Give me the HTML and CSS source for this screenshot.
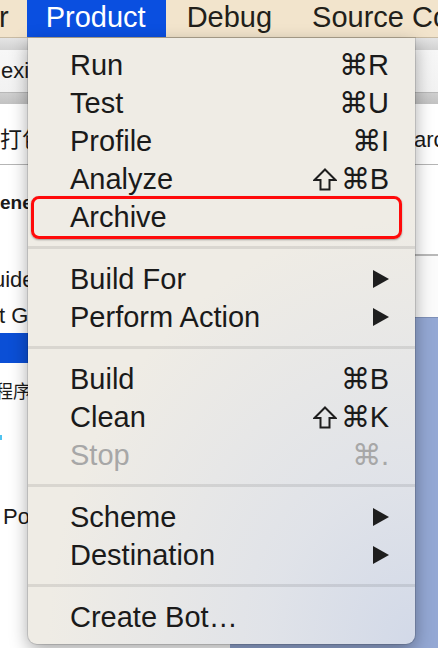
FILE: index.html
```html
<!DOCTYPE html>
<html>
<head>
<meta charset="utf-8">
<link rel="stylesheet" href="styles.css">
</head>
<body>
<div class="screen">
  <div class="menubar">
    <span class="mb-item mb-first">r</span>
    <span class="mb-item mb-active">Product</span>
    <span class="mb-item">Debug</span>
    <span class="mb-item">Source Control</span>
  </div>
  <div class="window">
    <div class="toolbar"></div>
    <div class="tabrow"><span class="tab-text">exi</span></div>
    <div class="greybar"></div>
    <div class="inforow">
      <span class="info-left">打包</span>
      <span class="info-right">arch</span>
    </div>
    <div class="panes">
      <div class="leftpane">
        <div class="lp-head"><span class="bold">ene</span></div>
        <div class="lp-row lp-uide">uide</div>
        <div class="lp-row lp-tg">t G</div>
        <div class="lp-selected"></div>
        <div class="lp-row lp-cjk">程序</div>
        <div class="lp-mark"><span class="cyan"></span></div>
        <div class="lp-row lp-po">Po</div>
      </div>
      <div class="rightpane">
        <div class="rp-white"></div>
        <div class="rp-white2"></div>
        <div class="rp-blue"></div>
      </div>
    </div>
  </div>

  <div class="menu">
    <div class="item"><span class="label">Run</span><span class="key">⌘R</span></div>
    <div class="item"><span class="label">Test</span><span class="key">⌘U</span></div>
    <div class="item"><span class="label">Profile</span><span class="key">⌘I</span></div>
    <div class="item"><span class="label">Analyze</span><span class="key"><svg class="shift" width="24" height="23" viewBox="0 0 24 23"><path d="M12 1.5 L22.5 12 H16.5 V21.5 H7.5 V12 H1.5 Z" fill="none" stroke="#1e1e1e" stroke-width="2" stroke-linejoin="miter"/></svg>⌘B</span></div>
    <div class="item item-marked"><span class="label">Archive</span></div>
    <div class="sep"></div>
    <div class="item"><span class="label">Build For</span><svg class="arrow" width="16" height="18" viewBox="0 0 16 18"><polygon points="0,0 16,9 0,18" fill="#1e1e1e"/></svg></div>
    <div class="item"><span class="label">Perform Action</span><svg class="arrow" width="16" height="18" viewBox="0 0 16 18"><polygon points="0,0 16,9 0,18" fill="#1e1e1e"/></svg></div>
    <div class="sep"></div>
    <div class="item"><span class="label">Build</span><span class="key">⌘B</span></div>
    <div class="item"><span class="label">Clean</span><span class="key"><svg class="shift" width="24" height="23" viewBox="0 0 24 23"><path d="M12 1.5 L22.5 12 H16.5 V21.5 H7.5 V12 H1.5 Z" fill="none" stroke="#1e1e1e" stroke-width="2" stroke-linejoin="miter"/></svg>⌘K</span></div>
    <div class="item item-disabled"><span class="label">Stop</span><span class="key">⌘.</span></div>
    <div class="sep"></div>
    <div class="item"><span class="label">Scheme</span><svg class="arrow" width="16" height="18" viewBox="0 0 16 18"><polygon points="0,0 16,9 0,18" fill="#1e1e1e"/></svg></div>
    <div class="item"><span class="label">Destination</span><svg class="arrow" width="16" height="18" viewBox="0 0 16 18"><polygon points="0,0 16,9 0,18" fill="#1e1e1e"/></svg></div>
    <div class="sep"></div>
    <div class="item"><span class="label">Create Bot…</span></div>
  </div>
</div>
</body>
</html>
```

FILE: styles.css
```css
*, *::before, *::after { box-sizing: border-box; }
html, body { margin: 0; padding: 0; }
body {
  width: 438px;
  height: 648px;
  overflow: hidden;
  font-family: "Liberation Sans", "DejaVu Sans", Arial, sans-serif;
  background: #ffffff;
}
.screen {
  position: relative;
  width: 438px;
  height: 648px;
  overflow: hidden;
}

/* menu bar */
.menubar {
  height: 38px;
  display: flex;
  background: #f2e4cc;
  border-bottom: 1px solid #c8bba4;
  white-space: nowrap;
  font-size: 29px;
  color: #221f1a;
}
.mb-item {
  flex: none;
  line-height: 35px;
  padding: 0 19px 0 21px;
}
.mb-first {
  padding: 0 18px 0 0;
  margin-left: -1px;
}
.mb-active {
  background: #0a4fe0;
  color: #ffffff;
  padding: 0 20px 0 19px;
}

/* window behind the menu */
.window {
  display: flex;
  flex-direction: column;
  height: 610px;
}
.toolbar {
  height: 12px;
  background: linear-gradient(#e4e4e4, #d2d2d2);
}
.tabrow {
  height: 42px;
  background: linear-gradient(#f7f7f7, #f2f2f2);
  font-size: 22px;
  color: #1a1a1a;
  display: flex;
  align-items: center;
  padding-left: 1px;
}
.greybar {
  height: 12px;
  background: linear-gradient(#cfcfcf, #c2c2c2);
  border-top: 1px solid #b8b8b8;
}
.inforow {
  height: 61px;
  background: #ffffff;
  border-bottom: 1px solid #b5b5b5;
  display: flex;
  align-items: flex-end;
  padding-bottom: 11px;
  font-size: 22px;
  color: #1a1a1a;
  white-space: nowrap;
  font-family: "Liberation Sans", "Noto Sans CJK SC", sans-serif;
}
.info-left { flex: none; width: 414px; }
.info-right { flex: none; }

.panes {
  flex: 1;
  display: flex;
}
.leftpane {
  width: 230px;
  background: #ffffff;
  display: flex;
  flex-direction: column;
  font-size: 22px;
  color: #1a1a1a;
  white-space: nowrap;
}
.lp-head {
  height: 96px;
  padding-top: 25px;
  line-height: 24px;
}
.bold { font-weight: bold; font-size: 19px; }
.lp-row { white-space: nowrap; }
.lp-uide { height: 38px; line-height: 38px; text-indent: -7px; }
.lp-tg { height: 34px; line-height: 34px; text-indent: -1px; }
.lp-selected { height: 30px; background: #0b4fd6; }
.lp-cjk {
  height: 54px;
  line-height: 54px;
  font-family: "Noto Sans CJK SC", sans-serif;
  font-size: 18px;
  text-indent: -5px;
}
.lp-mark { height: 80px; padding-top: 18px; }
.cyan { display: block; width: 2px; height: 5px; background: #4fc3f0; }
.lp-po { height: 40px; line-height: 40px; padding-left: 3px; }

.rightpane {
  flex: 1;
  display: flex;
  flex-direction: column;
}
.rp-white { height: 91px; background: #ffffff; border-bottom: 2px solid #b9b9b9; }
.rp-white2 { height: 61px; background: #fbfbfb; }
.rp-blue { flex: 1; background: #94a8d4; border-top: 1px solid #7e90b8; }

/* dropdown menu */
.menu {
  position: absolute;
  top: 38px;
  left: 28px;
  width: 387px;
  padding: 8px 0;
  border-radius: 0 0 9px 9px;
  background:
    radial-gradient(ellipse 95% 70% at 100% 100%, rgba(210,217,232,1) 0%, rgba(218,223,234,0.7) 40%, rgba(239,236,229,0) 100%),
    #efece5;
  box-shadow: 0 6px 18px rgba(0,0,0,0.35), 0 0 0 1px rgba(0,0,0,0.12);
  color: #1a1a1a;
  font-size: 29px;
}
.item {
  position: relative;
  height: 38px;
  display: flex;
  align-items: center;
  justify-content: space-between;
  padding: 0 26px 0 42px;
  white-space: nowrap;
}
.label { line-height: 38px; }
.key {
  font-family: "Liberation Sans", "DejaVu Sans", sans-serif;
  line-height: 38px;
  display: flex;
  align-items: center;
}
.shift {
  display: block;
  margin-right: 4px;
}
.arrow { display: block; }
.item-disabled { color: #a7a7a7; }
.item-marked::after {
  content: "";
  position: absolute;
  left: 3px;
  top: -2px;
  width: 371px;
  height: 43px;
  border: 3px solid #ff0a0a;
  border-radius: 8px;
  box-shadow: 0 1px 2px rgba(0,0,0,0.35);
}
.sep {
  height: 3px;
  margin: 10px 0 11px;
  background: rgba(0,0,0,0.09);
}
```
